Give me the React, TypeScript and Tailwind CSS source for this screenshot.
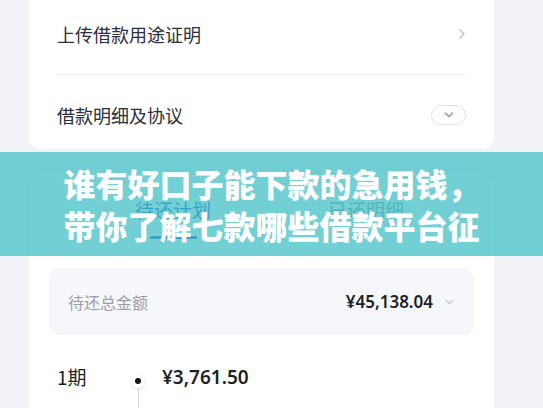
const FONT = { fontFamily: '"Noto Sans CJK SC", "Noto Sans", sans-serif' }

function ChevronRight() {
  return (
    <svg width="8" height="12" viewBox="0 0 8 12" fill="none">
      <path d="M2 2l4 4-4 4" stroke="#c4c7d0" strokeWidth="1.6" strokeLinecap="round" strokeLinejoin="round" />
    </svg>
  )
}

function PillToggle() {
  return (
    <div className="flex h-[20px] w-[35px] items-center justify-center rounded-full border border-[#dfe1ea] bg-white">
      <svg width="10" height="6" viewBox="0 0 10 6" fill="none">
        <path d="M1.5 1.2L5 4.5l3.5-3.3" stroke="#a3a7bb" strokeWidth="1.8" strokeLinecap="round" strokeLinejoin="round" />
      </svg>
    </div>
  )
}

export default function App() {
  return (
    <div className="relative h-[408px] w-[543px] overflow-hidden bg-[#f1f3f9]" style={FONT}>
      <div className="pl-[29px] pr-[49px]">
        {/* first card */}
        <div className="rounded-b-[12px] bg-white px-[28px]">
          <div className="flex h-[74px] items-center justify-between pb-[6px]">
            <span className="text-[18px] text-[#2b2e3b]">上传借款用途证明</span>
            <ChevronRight />
          </div>
          <div className="h-px bg-[#eceef3]" />
          <div className="flex h-[74px] items-center justify-between pt-[6px]">
            <span className="text-[18px] text-[#2b2e3b]">借款明细及协议</span>
            <PillToggle />
          </div>
        </div>

        {/* second card */}
        <div className="mt-[26px] h-[260px] rounded-t-[12px] bg-white px-[20px]">
          <div className="relative flex h-[66px] items-center pt-[4px] text-[19px]">
            <span className="ml-[86px] text-[#1f4fd0]">待还计划</span>
            <span className="ml-[117px] text-[#8a8d98]">已还明细</span>
            <div className="absolute left-[101px] top-[61px] h-[3px] w-[47px] rounded-full bg-[#1f4fd0]" />
          </div>
          <div className="mt-[27px] flex h-[67px] items-center justify-between rounded-[10px] bg-[#f6f7fb] pl-[19px] pr-[20px]">
            <span className="text-[16px] text-[#9a9ca6]">待还总金额</span>
            <div className="flex items-center gap-[12px]">
              <span className="text-[17px] font-semibold text-[#1d1f27]" style={{ fontFamily: '"Noto Sans", sans-serif' }}>
                ¥45,138.04
              </span>
              <svg width="9" height="6" viewBox="0 0 9 6" fill="none">
                <path d="M1 1.5l3.5 3 3.5-3" stroke="#c8cad3" strokeWidth="1.3" strokeLinecap="round" />
              </svg>
            </div>
          </div>
          <div className="mt-[28px] flex">
            <span className="w-[71px] pl-[8px] text-[19px] text-[#1d1f27]">1期</span>
            <div className="relative flex w-[36px] flex-col items-center pt-[11px]">
              <div className="flex h-[14px] w-[14px] items-center justify-center rounded-full bg-white shadow-[0_1px_3px_rgba(0,0,0,0.15)]">
                <div className="h-[6px] w-[6px] rounded-full bg-[#111]" />
              </div>
              <div className="h-[30px] w-px bg-[#d6d8df]" />
            </div>
            <div className="flex flex-col">
              <span className="pl-[6px] text-[19px] font-semibold text-[#1d1f27]" style={{ fontFamily: '"Noto Sans", sans-serif' }}>
                ¥3,761.50
              </span>
            </div>
          </div>
          <div className="-mt-[8px] flex text-[13px] text-[#b9bcc5]">
            <span className="w-[113px] pl-[8px]">2024/03/28</span>
            <span>本金 ¥3,500.00</span>
            <span className="pl-[40px]">利息 ¥261.50</span>
          </div>
        </div>
      </div>

      {/* title banner overlay */}
      <div className="absolute left-0 top-[152px] flex h-[104px] w-full flex-col items-center justify-center bg-[rgba(67,192,198,0.75)] text-[32px] font-black leading-[42px] text-white">
        <span>谁有好口子能下款的急用钱，</span>
        <span>带你了解七款哪些借款平台征</span>
      </div>
    </div>
  )
}
